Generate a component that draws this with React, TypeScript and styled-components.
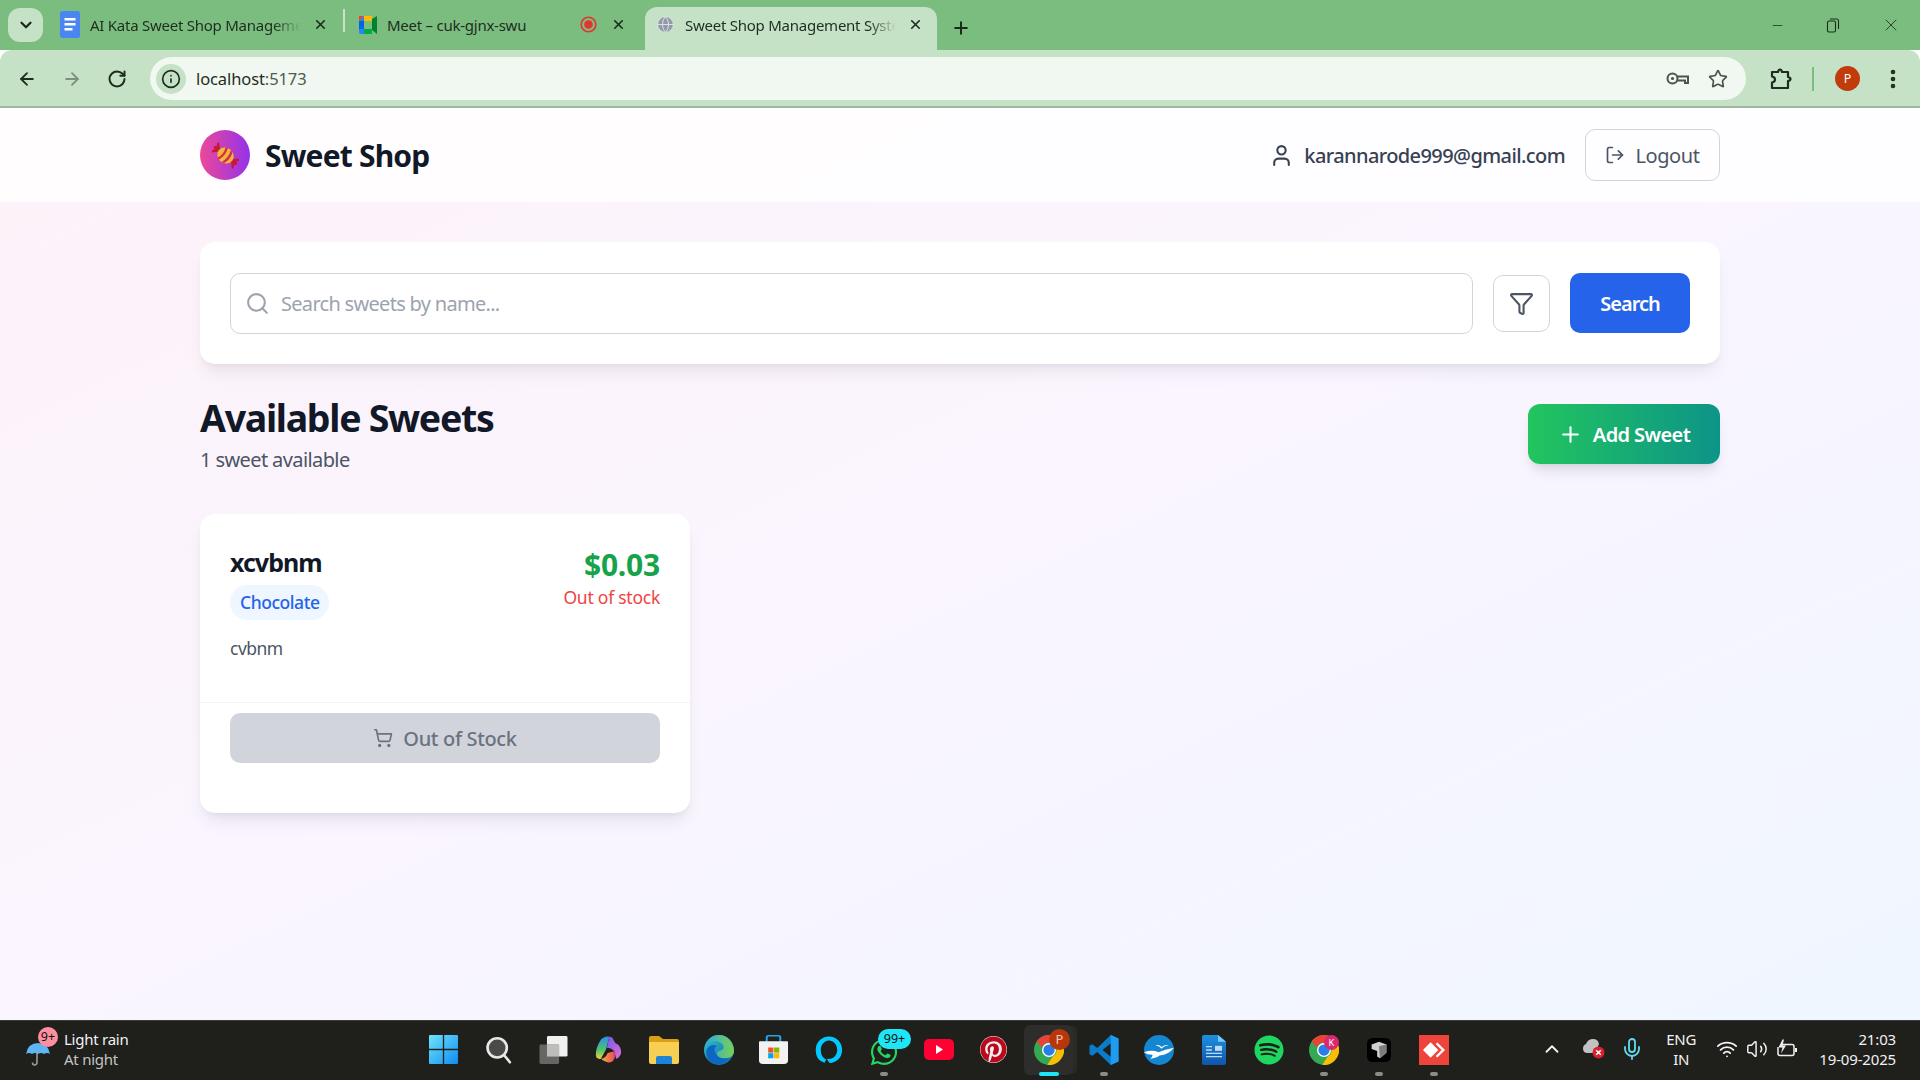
import React from 'react';
import styled, { createGlobalStyle } from 'styled-components';
import {
  ArrowLeft, ArrowRight, RotateCw, Info, Star, EllipsisVertical, X, ChevronDown, Plus, Minus,
  Search as SearchIcon, Filter, User, LogOut, ShoppingCart, ChevronUp, Mic, Wifi, Volume2, Globe,
} from 'lucide-react';
import { FaPinterest, FaSpotify, FaWhatsapp } from 'react-icons/fa';
import { SiAnydesk } from 'react-icons/si';

const sans = `"Noto Sans", "Open Sans", Arial, sans-serif`;

const Global = createGlobalStyle`
  html, body { margin: 0; padding: 0; width: 1920px; height: 1080px; overflow: hidden; }
  body { font-family: ${sans}; background: #fff; }
  * { box-sizing: border-box; }
`;

const Screen = styled.div`
  width: 1920px;
  height: 1080px;
  display: flex;
  flex-direction: column;
`;

/* ---------- browser chrome ---------- */
const TabStrip = styled.div`
  height: 50px;
  background: #7bbd7f;
  display: flex;
  align-items: flex-end;
  padding-left: 8px;
  flex: none;
`;
const TabMenu = styled.div`
  width: 35px;
  height: 34px;
  margin: 0 3px 8px 0;
  border-radius: 12px;
  background: #c5e1c6;
  color: #1c2a1d;
  display: flex;
  align-items: center;
  justify-content: center;
`;
const Tab = styled.div<{ $w: number; $active?: boolean; $pad: number; $padR: number }>`
  width: ${(p) => p.$w}px;
  height: 43px;
  padding: 0 ${(p) => p.$padR}px 8px ${(p) => p.$pad}px;
  display: flex;
  align-items: center;
  gap: 10px;
  flex: none;
  border-radius: 12px 12px 0 0;
  background: ${(p) => (p.$active ? '#c5e1c6' : 'transparent')};
  color: #1a2a1c;
`;
const TabTitle = styled.span<{ $fade?: boolean }>`
  flex: 1;
  min-width: 0;
  font-size: 15px;
  line-height: 20px;
  white-space: nowrap;
  color: #1f2d20;
  letter-spacing: -0.25px;
  ${(p) => p.$fade && 'mask-image: linear-gradient(to right, #000 86%, transparent 99%);'}
`;
const RecSlot = styled.span`
  display: flex;
  margin-right: 4px;
`;
const TabSeparator = styled.div`
  width: 2px;
  height: 23px;
  margin: 0 0 18px -1px;
  background: #c5e1c6;
  flex: none;
`;
const NewTab = styled.div`
  margin: 0 0 12px 14px;
  color: #1a2a1c;
  display: flex;
`;
const WindowControls = styled.div`
  margin: 0 19px 15px auto;
  display: flex;
  gap: 41px;
  align-items: center;
  color: #1d2b1e;
`;
const Toolbar = styled.div`
  height: 58px;
  flex: none;
  background: #c5e1c6;
  border-radius: 12px 12px 0 0;
  border-bottom: 2px solid #9db8a0;
  display: flex;
  align-items: center;
  padding: 1px 0 0 17px;
  color: #1f2d20;
`;
const NavGroup = styled.div`
  display: flex;
  gap: 25px;
  margin-right: 23px;
`;
const Omnibox = styled.div`
  width: 1596px;
  height: 43px;
  border-radius: 22px;
  background: #f1f8f1;
  display: flex;
  align-items: center;
  padding: 0 18px 0 6px;
  gap: 10px;
`;
const InfoChip = styled.div`
  width: 30px;
  height: 30px;
  border-radius: 50%;
  background: #c5e1c6;
  display: flex;
  align-items: center;
  justify-content: center;
`;
const Url = styled.span`
  font-size: 16.5px;
  color: #1f2d20;
  letter-spacing: -0.1px;
  flex: 1;
  span { color: #4e5c50; }
`;
const OmniIcons = styled.div`
  display: flex;
  gap: 19px;
  align-items: center;
  color: #4a544c;
`;
const ToolbarEnd = styled.div`
  display: flex;
  align-items: center;
  margin-left: 24px;
`;
const ToolbarDivider = styled.div`
  width: 2px;
  height: 24px;
  background: #7bbd7f;
  margin: 0 21px 0 20px;
`;
const Avatar = styled.div`
  width: 25px;
  height: 25px;
  border-radius: 50%;
  background: #c23b0c;
  color: #fff;
  font-size: 12.5px;
  display: flex;
  align-items: center;
  justify-content: center;
  margin-right: 21px;
`;

/* ---------- app page ---------- */
const Page = styled.div`
  flex: 1;
  min-height: 0;
  background: linear-gradient(to bottom right, #fdf2f8, #faf5ff 50%, #eff6ff);
  display: flex;
  flex-direction: column;
`;
const Header = styled.header`
  height: 94px;
  flex: none;
  background: rgba(255, 255, 255, 0.8);
`;
const Container = styled.div`
  width: 1520px;
  margin: 0 auto;
`;
const HeaderRow = styled(Container)`
  height: 100%;
  display: flex;
  align-items: center;
  justify-content: space-between;
`;
const Brand = styled.div`
  display: flex;
  align-items: center;
  gap: 15px;
`;
const LogoCircle = styled.div`
  width: 50px;
  height: 50px;
  border-radius: 50%;
  background: linear-gradient(to right, #ec4899, #9333ea);
  display: flex;
  align-items: center;
  justify-content: center;
`;
const BrandName = styled.h1`
  margin: 2px 0 0;
  font-size: 30px;
  line-height: 38px;
  font-weight: 700;
  color: #111827;
  letter-spacing: -0.82px;
`;
const Account = styled.div`
  display: flex;
  align-items: center;
  gap: 20px;
`;
const UserInfo = styled.div`
  display: flex;
  align-items: center;
  gap: 10px;
  font-size: 20px;
  font-weight: 500;
  color: #374151;
  letter-spacing: -0.6px;
`;
const LogoutButton = styled.button`
  width: 135px;
  height: 52px;
  border: 1.25px solid #d1d5db;
  border-radius: 10px;
  background: transparent;
  font: 400 20px ${sans};
  color: #4b5563;
  display: flex;
  align-items: center;
  justify-content: center;
  gap: 10px;
  letter-spacing: -0.4px;
`;
const Main = styled(Container)`
  padding-top: 40px;
`;
const SearchCard = styled.section`
  height: 122px;
  background: #fff;
  border-radius: 15px;
  box-shadow: 0 12px 18px -4px rgba(0, 0, 0, 0.07), 0 4px 8px -4px rgba(0, 0, 0, 0.07);
  padding: 0 30px;
  display: flex;
  align-items: center;
  gap: 20px;
`;
const SearchField = styled.div`
  flex: 1;
  height: 61px;
  border: 1.25px solid #d1d5db;
  border-radius: 10px;
  display: flex;
  align-items: center;
  gap: 9px;
  padding-left: 14px;
  color: #9ca3af;
`;
const SearchInput = styled.input`
  flex: 1;
  border: 0;
  outline: 0;
  background: transparent;
  font: 400 20px ${sans};
  letter-spacing: -0.7px;
  &::placeholder { color: #9ca3af; opacity: 1; }
`;
const FilterButton = styled.button`
  width: 57px;
  height: 57px;
  border: 1.25px solid #d1d5db;
  border-radius: 10px;
  background: #fff;
  color: #4b5563;
  display: flex;
  align-items: center;
  justify-content: center;
  padding: 0;
`;
const SearchButton = styled.button`
  width: 120px;
  height: 60px;
  border: 0;
  border-radius: 10px;
  background: #2563eb;
  color: #fff;
  font: 600 20px ${sans};
  letter-spacing: -1px;
`;
const SectionHead = styled.div`
  margin-top: 40px;
  height: 70px;
  display: flex;
  justify-content: space-between;
  align-items: flex-start;
`;
const SectionTitle = styled.h2`
  margin: 0;
  font-size: 37.5px;
  line-height: 28px;
  font-weight: 700;
  color: #111827;
  letter-spacing: -1.3px;
`;
const SectionCount = styled.p`
  margin: 15px 0 0;
  font-size: 20px;
  line-height: 26px;
  color: #4b5563;
  letter-spacing: -0.6px;
`;
const AddButton = styled.button`
  width: 192px;
  height: 60px;
  border: 0;
  border-radius: 12px;
  background: linear-gradient(to right, #22c55e, #0d9488);
  box-shadow: 0 10px 14px -3px rgba(0, 0, 0, 0.1), 0 4px 6px -4px rgba(0, 0, 0, 0.1);
  color: #fff;
  font: 600 20px ${sans};
  letter-spacing: -0.6px;
  display: flex;
  align-items: center;
  justify-content: center;
  gap: 10px;
`;
const SweetCard = styled.article`
  margin-top: 40px;
  width: 490px;
  height: 299px;
  background: #fff;
  border-radius: 15px;
  box-shadow: 0 12px 18px -4px rgba(0, 0, 0, 0.08), 0 4px 8px -4px rgba(0, 0, 0, 0.08);
  display: flex;
  flex-direction: column;
`;
const CardBody = styled.div`
  height: 189px;
  padding: 32px 30px 0;
  border-bottom: 1.25px solid #f3f4f6;
`;
const CardTop = styled.div`
  display: flex;
  justify-content: space-between;
`;
const SweetName = styled.h3`
  margin: 0 0 7px;
  font-size: 25px;
  line-height: 32px;
  font-weight: 700;
  color: #111827;
  letter-spacing: -1px;
`;
const CategoryPill = styled.span`
  display: inline-block;
  height: 35px;
  padding: 0 9px 0 10px;
  border-radius: 18px;
  background: #eff6ff;
  color: #2563eb;
  font-size: 17.5px;
  line-height: 35px;
  font-weight: 500;
  letter-spacing: -0.45px;
`;
const PriceBlock = styled.div`
  text-align: right;
`;
const Price = styled.div`
  font-size: 30px;
  line-height: 38px;
  font-weight: 700;
  color: #16a34a;
  letter-spacing: -0.2px;
`;
const StockNote = styled.div`
  margin-top: 1px;
  font-size: 17.5px;
  line-height: 24px;
  color: #ef4444;
  letter-spacing: -0.25px;
`;
const Description = styled.p`
  margin: 16px 0 0;
  font-size: 17.5px;
  line-height: 24px;
  color: #4b5563;
  letter-spacing: -0.5px;
`;
const CardFoot = styled.div`
  padding: 10px 30px 0;
`;
const StockButton = styled.button`
  width: 100%;
  height: 50px;
  border: 0;
  border-radius: 10px;
  background: #d1d5db;
  color: #6b7280;
  font: 500 20px ${sans};
  letter-spacing: -0.35px;
  display: flex;
  align-items: center;
  justify-content: center;
  gap: 10px;
`;

/* ---------- taskbar ---------- */
const Taskbar = styled.footer`
  height: 60px;
  flex: none;
  background: #1f1f1c;
  border-top: 1px solid #3c3c3a;
  display: flex;
  align-items: center;
`;
const Weather = styled.div`
  width: 416px;
  flex: none;
  display: flex;
  align-items: center;
  padding-left: 26px;
  gap: 14px;
`;
const WeatherIcon = styled.div`
  position: relative;
  width: 24px;
  height: 24px;
  margin-top: 6px;
`;
const WeatherBadge = styled.span`
  position: absolute;
  left: 12px;
  top: -15px;
  width: 20px;
  height: 20px;
  border-radius: 50%;
  background: #ff8f9f;
  color: #111;
  font-size: 12.5px;
  line-height: 20px;
  text-align: center;
`;
const WeatherText = styled.div`
  font-size: 15px;
  line-height: 20px;
  margin-top: -3px;
  color: #f2f2f2;
  letter-spacing: -0.25px;
  span { display: block; color: #c4c4c4; }
`;
const Dock = styled.div`
  display: flex;
  flex: none;
`;
const Slot = styled.div<{ $active?: boolean }>`
  width: 55px;
  height: 59px;
  padding-bottom: 2px;
  display: flex;
  align-items: center;
  justify-content: center;
  position: relative;
  ${(p) =>
    p.$active &&
    `&::before {
      content: '';
      position: absolute;
      left: 3px; right: 3px; top: 4px; bottom: 5px;
      border-radius: 6px;
      background: #2d2d2b;
      box-shadow: 5px 0 0 -1px #292927;
    }`}
  svg { position: relative; }
`;
const RunDot = styled.span<{ $active?: boolean }>`
  position: absolute;
  bottom: 4px;
  left: 50%;
  transform: translateX(-50%);
  width: ${(p) => (p.$active ? 20 : 8)}px;
  height: 4px;
  border-radius: 2px;
  background: ${(p) => (p.$active ? '#1fe6f5' : '#8b8b8b')};
`;
const AppBadge = styled.span<{ $bg: string; $fg: string; $size: number; $top: number }>`
  position: absolute;
  top: ${(p) => p.$top}px;
  left: 28px;
  width: ${(p) => p.$size}px;
  height: ${(p) => p.$size}px;
  border-radius: 50%;
  background: ${(p) => p.$bg};
  color: ${(p) => p.$fg};
  font-size: ${(p) => p.$size * 0.62}px;
  line-height: ${(p) => p.$size}px;
  text-align: center;
`;
const CountBadge = styled.span`
  position: absolute;
  top: 8px;
  left: 22px;
  width: 33px;
  height: 20px;
  border-radius: 10px;
  background: #1fe6f5;
  color: #111;
  font-size: 12.5px;
  line-height: 20px;
  text-align: center;
`;
const WhatsappMark = styled.span`
  display: flex;
  margin-top: 5px;
`;
const Tray = styled.div`
  margin-left: auto;
  display: flex;
  align-items: center;
  color: #f2f2f2;
  padding: 0 24px 3px 0;
`;
const TrayIcons = styled.div<{ $gap: number; $ml: number }>`
  display: flex;
  align-items: center;
  gap: ${(p) => p.$gap}px;
  margin-left: ${(p) => p.$ml}px;
`;
const Lang = styled.div`
  margin-left: 22px;
  font-size: 15px;
  line-height: 20px;
  text-align: center;
  letter-spacing: -0.2px;
`;
const Clock = styled.div`
  margin-left: 21px;
  font-size: 15px;
  line-height: 20px;
  text-align: right;
  letter-spacing: -0.16px;
`;

/* ---------- drawings ---------- */
const Candy = () => (
  <svg width="27" height="27" viewBox="0 0 30 30">
    <g transform="rotate(38 15 15)">
      <path d="M6 15 L0.5 9.5 L2.5 13 L0 15 L2.5 17 L0.5 20.5Z" fill="#c9173a" stroke="#c9173a" strokeWidth="2.4" strokeLinejoin="round" />
      <path d="M24 15 L29.5 9.5 L27.5 13 L30 15 L27.5 17 L29.5 20.5Z" fill="#c9173a" stroke="#c9173a" strokeWidth="2.4" strokeLinejoin="round" />
      <ellipse cx="15" cy="15" rx="9.5" ry="8.5" fill="#f2b83c" />
      <path d="M9.5 8 Q13 15 9.5 22 L12 23.2 Q15.5 15 12 6.8Z" fill="#d92b4b" />
      <path d="M16 6.6 Q19.5 15 16 23.4 L19 22.5 Q22 15 19 7.5Z" fill="#d92b4b" />
    </g>
  </svg>
);
const DocsFavicon = () => (
  <svg width="20" height="27" viewBox="0 0 20 27">
    <rect width="20" height="27" rx="2.5" fill="#4a86f2" />
    <rect x="4.5" y="7" width="11" height="2.5" fill="#fff" />
    <rect x="4.5" y="12" width="11" height="2.5" fill="#fff" />
    <rect x="4.5" y="17" width="8" height="2.5" fill="#fff" />
  </svg>
);
const MeetFavicon = () => (
  <svg width="18" height="18" viewBox="0 0 18 18">
    <path d="M0 5 L5 0 V18 H2 Q0 18 0 16Z" fill="#2684fc" />
    <path d="M5 0 H13 V5 H5Z" fill="#ffba00" />
    <path d="M0 5 H5 V13 H0Z" fill="#0066da" />
    <path d="M5 13 H13 V18 H5Z" fill="#00ac47" />
    <path d="M13 3 L18 0 V18 L13 14Z" fill="#00832d" />
    <path d="M0 0 L5 0 L0 5Z" fill="#ea4335" />
  </svg>
);
const RecDot = () => (
  <svg width="17" height="17" viewBox="0 0 17 17">
    <circle cx="8.5" cy="8.5" r="7.3" fill="none" stroke="#e3342f" strokeWidth="1.6" />
    <circle cx="8.5" cy="8.5" r="4.3" fill="#e3342f" />
  </svg>
);
const Restore = () => (
  <svg width="14" height="15" viewBox="0 0 14 15" fill="none" stroke="currentColor" strokeWidth="1.1">
    <rect x="1.5" y="3" width="8" height="11" rx="1.5" />
    <path d="M4 1 H10.5 Q12.5 1 12.5 3 V11" />
  </svg>
);
const KeyIcon = () => (
  <svg width="23" height="13" viewBox="0 0 23 13" fill="none" stroke="currentColor" strokeWidth="2">
    <circle cx="6.5" cy="6.5" r="5" />
    <circle cx="6.5" cy="6.5" r="1.6" fill="currentColor" stroke="none" />
    <path d="M11.5 4.5 H22 V11 H19 V8.5 H11.5" />
  </svg>
);
const PuzzleIcon = () => (
  <svg width="22" height="24" viewBox="0 0 22 24" fill="none" stroke="#1f2d20" strokeWidth="2.2" strokeLinejoin="round">
    <path d="M2 5 H8 Q8.5 2.5 10 2.5 Q11.5 2.5 12 5 H18 V10 Q20.5 10.5 20.5 12 Q20.5 13.5 18 14 V21 H2 V15.5 Q5 15 5 12.5 Q5 10 2 9.5 Z" />
  </svg>
);
const WindowsLogo = () => (
  <svg width="29" height="29" viewBox="0 0 30 30">
    <defs>
      <linearGradient id="win" x1="0" y1="0" x2="1" y2="1">
        <stop offset="0" stopColor="#6fe4fb" />
        <stop offset="1" stopColor="#0f8cf0" />
      </linearGradient>
    </defs>
    <path d="M0 1 Q0 0 1 0 H14.3 V14.3 H0Z M15.7 0 H29 Q30 0 30 1 V14.3 H15.7Z M0 15.7 H14.3 V30 H1 Q0 30 0 29Z M15.7 15.7 H30 V29 Q30 30 29 30 H15.7Z" fill="url(#win)" />
  </svg>
);
const TaskSearch = () => (
  <svg width="27" height="28" viewBox="0 0 30 32" fill="none">
    <circle cx="13.5" cy="13.5" r="11" fill="#4a4a48" stroke="#e8e8e8" strokeWidth="3" />
    <path d="M21.5 22 L28 30" stroke="#e8e8e8" strokeWidth="3" strokeLinecap="round" />
  </svg>
);
const TaskView = () => (
  <svg width="29" height="28" viewBox="0 0 30 30">
    <rect x="8" y="0" width="22" height="22" rx="1.5" fill="#f0f0f0" />
    <rect x="0" y="9" width="21" height="21" rx="1.5" fill="#6a6a68" opacity=".95" />
    <rect x="8" y="9" width="13" height="13" fill="#bdbdbb" />
  </svg>
);
const Copilot = () => (
  <svg width="27" height="27" viewBox="0 0 30 32">
    <defs>
      <linearGradient id="cp1" x1="0" y1="0" x2="0" y2="1">
        <stop offset="0" stopColor="#2b8fe8" />
        <stop offset=".6" stopColor="#4fc46e" />
        <stop offset="1" stopColor="#f0d040" />
      </linearGradient>
      <linearGradient id="cp2" x1="0" y1="0" x2="1" y2="1">
        <stop offset="0" stopColor="#6e5cf0" />
        <stop offset="1" stopColor="#e86ad0" />
      </linearGradient>
      <linearGradient id="cp3" x1="0" y1="0" x2="1" y2="0">
        <stop offset="0" stopColor="#f4b040" />
        <stop offset="1" stopColor="#e84a5a" />
      </linearGradient>
    </defs>
    <path d="M9 2 Q12 0 16 1 L12 16 L6 27 Q0 28 0 22 Q0 14 5 6 Q6 3 9 2Z" fill="url(#cp1)" />
    <path d="M16 1 Q20 1 21 5 Q22 8 26 10 Q30 13 30 20 Q28 26 24 27 L22 18 Q18 14 13 14Z" fill="url(#cp2)" />
    <path d="M6 27 Q12 26 14 20 L22 18 Q24 26 20 30 Q17 32 14 31 Q9 30 6 27Z" fill="url(#cp3)" />
  </svg>
);
const FolderIcon = () => (
  <svg width="30" height="28" viewBox="0 0 30 28">
    <path d="M0 2 Q0 0 2 0 H10 L14 3 H28 Q30 3 30 5 V8 H0Z" fill="#d9a016" />
    <path d="M0 6 H30 V26 Q30 28 28 28 H2 Q0 28 0 26Z" fill="#f7cf52" />
    <path d="M7 22 Q7 20 9 20 H21 Q23 20 23 22 V28 H7Z" fill="#1f84d8" />
  </svg>
);
const EdgeIcon = () => (
  <svg width="30" height="30" viewBox="0 0 30 30">
    <defs>
      <linearGradient id="edgeA" x1="0" y1="0" x2="1" y2="1">
        <stop offset="0" stopColor="#33c6c0" />
        <stop offset="1" stopColor="#0a5fb4" />
      </linearGradient>
      <linearGradient id="edgeB" x1="0" y1="0" x2="1" y2="0">
        <stop offset="0" stopColor="#2fa8e0" />
        <stop offset="1" stopColor="#7ad24e" />
      </linearGradient>
    </defs>
    <circle cx="15" cy="15" r="15" fill="url(#edgeA)" />
    <path d="M30 16 C30 8 24 0 15 0 C8 0 3 5 2 10 C6 5 13 5 17 8 C20 10 20 13 19 14 C17 16 12 16 13 20 C14 23 20 24 24 23 C28 22 30 19 30 16Z" fill="url(#edgeB)" />
    <path d="M13 20 C14 23 20 24 24 23 C21 28 14 31 8 28 C3 25 1 18 3 14 C5 10 10 9 13 11 C9 13 11 18 13 20Z" fill="#0d66c2" />
  </svg>
);
const StoreIcon = () => (
  <svg width="29" height="29" viewBox="0 0 30 37" preserveAspectRatio="none">
    <path d="M8 9 V3 Q8 1 10 1 H20 Q22 1 22 3 V9" fill="none" stroke="#1fa9ee" strokeWidth="2" />
    <path d="M1 8 H29 Q30 8 30 9 V33 Q30 37 26 37 H4 Q0 37 0 33 V9 Q0 8 1 8Z" fill="#f2f2f2" />
    <rect x="9.5" y="16" width="5.4" height="6.5" fill="#f25022" />
    <rect x="15.6" y="16" width="5.4" height="6.5" fill="#7fba00" />
    <rect x="9.5" y="23.2" width="5.4" height="6.5" fill="#00a4ef" />
    <rect x="15.6" y="23.2" width="5.4" height="6.5" fill="#ffb900" />
  </svg>
);
const AlexaIcon = () => (
  <svg width="30" height="30" viewBox="0 0 31 38" fill="none" preserveAspectRatio="none">
    <path d="M11 35 C4 33 1.8 26 1.8 19 C1.8 9 8 2 15.5 2 C23 2 29 9 29 19 C29 28 24 35 16 35.5 L13 30 C19 32 24 26 24 19 C24 12 20 7 15.5 7 C11 7 7 12 7 19 C7 25 9 29 12.5 31Z" fill="#00caff" />
  </svg>
);
const YoutubeIcon = () => (
  <svg width="30" height="21" viewBox="0 0 30 21">
    <rect width="30" height="21" rx="5" fill="#ff0033" />
    <path d="M12 6 L19 10.5 L12 15Z" fill="#fff" />
  </svg>
);
const ChromeIcon = () => (
  <svg width="30" height="30" viewBox="0 0 24 24">
    <circle cx="12" cy="12" r="12" fill="#34a853" />
    <path d="M2.2 5 A12 12 0 0 1 22.4 6 H12 A6 6 0 0 0 6.3 10.1 Z" fill="#ea4335" />
    <path d="M22.4 6 H12 A6 6 0 0 1 15 17.2 L10.5 23.9 A12 12 0 0 0 22.4 6Z" fill="#fbbc04" />
    <circle cx="12" cy="12" r="5.6" fill="#fff" />
    <circle cx="12" cy="12" r="4.5" fill="#2a7de8" />
  </svg>
);
const VsCodeIcon = () => (
  <svg width="30" height="30" viewBox="0 0 30 31">
    <path d="M22 0 L30 3.5 V27.5 L22 31 L8 17.5 L3 21.5 L0 20 V11 L3 9.5 L8 13.5Z M22 8.5 L13.5 15.5 L22 22.5Z" fill="#0a7ccb" fillRule="evenodd" />
    <path d="M22 0 L30 3.5 V27.5 L22 31Z" fill="#1f9cf0" />
  </svg>
);
const BirdIcon = () => (
  <svg width="30" height="30" viewBox="0 0 29 35" preserveAspectRatio="none">
    <ellipse cx="14.5" cy="17.5" rx="14.5" ry="17.5" fill="#1586d2" />
    <path d="M0 20 Q8 17 14 20 Q20 17 29 15 Q24 23 15 24 Q14 26 6 28 Q9 24 8 23 Q3 23 0 20Z" fill="#fff" />
    <path d="M11 12 Q15 11 17 14 Q20 11 24 12 Q19 13 17 16 Q15 13 11 12Z" fill="#fff" />
  </svg>
);
const WriterIcon = () => (
  <svg width="24" height="30" viewBox="0 0 24 36" preserveAspectRatio="none">
    <defs>
      <linearGradient id="wr" x1="0" y1="0" x2="0" y2="1">
        <stop offset="0" stopColor="#1f8fe0" />
        <stop offset="1" stopColor="#0f55a8" />
      </linearGradient>
    </defs>
    <path d="M2 0 H16 L24 8 V34 Q24 36 22 36 H2 Q0 36 0 34 V2 Q0 0 2 0Z" fill="url(#wr)" />
    <path d="M16 0 L24 8 H16Z" fill="#7cc8f5" />
    <path d="M4 14 H10 M4 18 H10 M4 22 H20 M4 26 H20" stroke="#bcdcf5" strokeWidth="1.6" />
    <rect x="13" y="13" width="7" height="6" fill="#bcdcf5" />
  </svg>
);
const BoxIcon = () => (
  <svg width="24" height="24" viewBox="0 0 26 26">
    <rect width="26" height="26" rx="6" fill="#000" />
    <path d="M5 7 L13 4 L21 7 L21 16 L14 22 L11 20 V14 L5 12Z" fill="#cfcfcf" />
    <path d="M13 9 L21 7 V16 L14 22Z" fill="#7c7c7c" />
  </svg>
);
const AnyDeskIcon = () => (
  <svg width="30" height="30" viewBox="0 0 30 30">
    <rect width="30" height="30" fill="#ef443b" />
    <g transform="translate(4 4)">
      <SiAnydesk size={22} color="#fff" />
    </g>
  </svg>
);
const Umbrella = () => (
  <svg width="24" height="24" viewBox="0 0 24 24" fill="none">
    <path d="M0 12 Q2 1 12 1 Q22 1 24 12 Q21 10 18 12 Q15 10 12 12 Q9 10 6 12 Q3 10 0 12Z" fill="#5fb4f2" />
    <path d="M11 11 V20 Q11 23 8.5 23 Q6.5 23 6.5 20.5" stroke="#9a9a9a" strokeWidth="1.6" />
  </svg>
);
const CloudOff = () => (
  <svg width="22" height="20" viewBox="0 0 22 20">
    <path d="M5 14 Q0 14 0 9.5 Q0 6 3 5 Q5 0 10 0 Q15 0 16 5 L12 14Z" fill="#c2c2c2" />
    <circle cx="15.5" cy="13.5" r="6" fill="#d8202f" />
    <path d="M13.2 11.2 L17.8 15.8 M17.8 11.2 L13.2 15.8" stroke="#fff" strokeWidth="1.5" />
  </svg>
);
const BatteryIcon = () => (
  <svg width="22" height="20" viewBox="0 0 22 20" fill="none" stroke="#f2f2f2" strokeWidth="1.5">
    <path d="M6 5.5 H16 Q18 5.5 18 7.5 V14.5 Q18 16.5 16 16.5 H4 Q2 16.5 2 14.5 V8" />
    <path d="M20 9 V13" strokeWidth="2" />
    <path d="M6.5 0.5 L2.5 8.5 H6.5 L5 14.5 L10 6.5 H6.5 L8 0.5Z" fill="#f2f2f2" stroke="none" />
  </svg>
);
const GlobeFavicon = () => (
  <Globe size={19} color="#dfe6e0" fill="#8f9ba8" strokeWidth={1.2} />
);

const App = () => (
  <Screen>
    <Global />
    <TabStrip>
      <TabMenu><ChevronDown size={18} strokeWidth={3} /></TabMenu>
      <Tab $w={298} $pad={14} $padR={16}>
        <DocsFavicon />
        <TabTitle $fade>AI Kata Sweet Shop Manageme</TabTitle>
        <X size={15} strokeWidth={2.6} />
      </Tab>
      <TabSeparator />
      <Tab $w={300} $pad={14} $padR={19}>
        <MeetFavicon />
        <TabTitle>Meet – cuk-gjnx-swu</TabTitle>
        <RecSlot><RecDot /></RecSlot>
        <X size={15} strokeWidth={2.6} />
      </Tab>
      <Tab $w={292} $pad={11} $padR={14} $active>
        <GlobeFavicon />
        <TabTitle $fade>Sweet Shop Management Syste</TabTitle>
        <X size={15} strokeWidth={2.6} />
      </Tab>
      <NewTab><Plus size={20} strokeWidth={2.4} /></NewTab>
      <WindowControls>
        <Minus size={15} strokeWidth={1.2} />
        <Restore />
        <X size={20} strokeWidth={1} />
      </WindowControls>
    </TabStrip>
    <Toolbar>
      <NavGroup>
        <ArrowLeft size={20} strokeWidth={2.2} />
        <ArrowRight size={20} strokeWidth={2.2} color="#7e8f80" />
        <RotateCw size={20} strokeWidth={2.4} />
      </NavGroup>
      <Omnibox>
        <InfoChip><Info size={20} strokeWidth={2} /></InfoChip>
        <Url>localhost<span>:5173</span></Url>
        <OmniIcons>
          <KeyIcon />
          <Star size={20} strokeWidth={2} />
        </OmniIcons>
      </Omnibox>
      <ToolbarEnd>
        <PuzzleIcon />
        <ToolbarDivider />
        <Avatar>P</Avatar>
        <EllipsisVertical size={24} strokeWidth={2.6} />
      </ToolbarEnd>
    </Toolbar>

    <Page>
      <Header>
        <HeaderRow>
          <Brand>
            <LogoCircle><Candy /></LogoCircle>
            <BrandName>Sweet Shop</BrandName>
          </Brand>
          <Account>
            <UserInfo>
              <User size={25} strokeWidth={2} />
              karannarode999@gmail.com
            </UserInfo>
            <LogoutButton>
              <LogOut size={20} strokeWidth={2} />
              Logout
            </LogoutButton>
          </Account>
        </HeaderRow>
      </Header>
      <Main>
        <SearchCard>
          <SearchField>
            <SearchIcon size={25} strokeWidth={2} />
            <SearchInput placeholder="Search sweets by name..." readOnly />
          </SearchField>
          <FilterButton><Filter size={25} strokeWidth={2} /></FilterButton>
          <SearchButton>Search</SearchButton>
        </SearchCard>
        <SectionHead>
          <div>
            <SectionTitle>Available Sweets</SectionTitle>
            <SectionCount>1 sweet available</SectionCount>
          </div>
          <AddButton>
            <Plus size={25} strokeWidth={2} />
            Add Sweet
          </AddButton>
        </SectionHead>
        <SweetCard>
          <CardBody>
            <CardTop>
              <div>
                <SweetName>xcvbnm</SweetName>
                <CategoryPill>Chocolate</CategoryPill>
              </div>
              <PriceBlock>
                <Price>$0.03</Price>
                <StockNote>Out of stock</StockNote>
              </PriceBlock>
            </CardTop>
            <Description>cvbnm</Description>
          </CardBody>
          <CardFoot>
            <StockButton>
              <ShoppingCart size={20} strokeWidth={2} />
              Out of Stock
            </StockButton>
          </CardFoot>
        </SweetCard>
      </Main>
    </Page>

    <Taskbar>
      <Weather>
        <WeatherIcon>
          <Umbrella />
          <WeatherBadge>9+</WeatherBadge>
        </WeatherIcon>
        <WeatherText>Light rain<span>At night</span></WeatherText>
      </Weather>
      <Dock>
        <Slot><WindowsLogo /></Slot>
        <Slot><TaskSearch /></Slot>
        <Slot><TaskView /></Slot>
        <Slot><Copilot /></Slot>
        <Slot><FolderIcon /></Slot>
        <Slot><EdgeIcon /></Slot>
        <Slot><StoreIcon /></Slot>
        <Slot><AlexaIcon /></Slot>
        <Slot>
          <WhatsappMark><FaWhatsapp size={30} color="#25d366" /></WhatsappMark>
          <CountBadge>99+</CountBadge>
          <RunDot />
        </Slot>
        <Slot><YoutubeIcon /></Slot>
        <Slot><FaPinterest size={27} color="#bd081c" style={{ background: '#eee', borderRadius: '50%' }} /></Slot>
        <Slot $active>
          <ChromeIcon />
          <AppBadge $bg="#b8360b" $fg="#f0c9b0" $size={21} $top={8}>P</AppBadge>
          <RunDot $active />
        </Slot>
        <Slot><VsCodeIcon /><RunDot /></Slot>
        <Slot><BirdIcon /></Slot>
        <Slot><WriterIcon /></Slot>
        <Slot><FaSpotify size={30} color="#1ed760" /></Slot>
        <Slot>
          <ChromeIcon />
          <AppBadge $bg="#d8286e" $fg="#fff" $size={15} $top={14}>K</AppBadge>
          <RunDot />
        </Slot>
        <Slot><BoxIcon /><RunDot /></Slot>
        <Slot><AnyDeskIcon /><RunDot /></Slot>
      </Dock>
      <Tray>
        <ChevronUp size={22} strokeWidth={2} />
        <TrayIcons $gap={15} $ml={20}>
          <CloudOff />
          <Mic size={24} color="#5fdcec" strokeWidth={1.8} />
        </TrayIcons>
        <Lang>ENG<br />IN</Lang>
        <TrayIcons $gap={8} $ml={20}>
          <Wifi size={22} strokeWidth={2} />
          <Volume2 size={22} strokeWidth={1.6} />
          <BatteryIcon />
        </TrayIcons>
        <Clock>21:03<br />19-09-2025</Clock>
      </Tray>
    </Taskbar>
  </Screen>
);

export default App;
